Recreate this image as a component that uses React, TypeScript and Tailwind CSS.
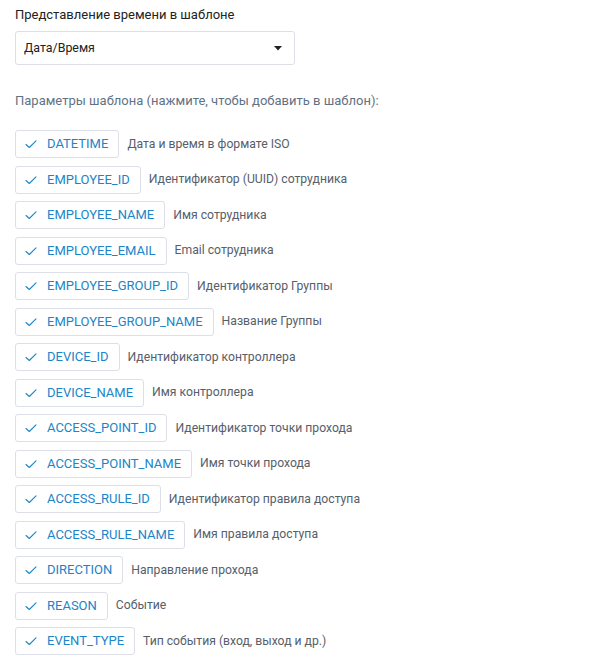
import React from "react";

const params: [string, string][] = [
  ["DATETIME", "Дата и время в формате ISO"],
  ["EMPLOYEE_ID", "Идентификатор (UUID) сотрудника"],
  ["EMPLOYEE_NAME", "Имя сотрудника"],
  ["EMPLOYEE_EMAIL", "Email сотрудника"],
  ["EMPLOYEE_GROUP_ID", "Идентификатор Группы"],
  ["EMPLOYEE_GROUP_NAME", "Название Группы"],
  ["DEVICE_ID", "Идентификатор контроллера"],
  ["DEVICE_NAME", "Имя контроллера"],
  ["ACCESS_POINT_ID", "Идентификатор точки прохода"],
  ["ACCESS_POINT_NAME", "Имя точки прохода"],
  ["ACCESS_RULE_ID", "Идентификатор правила доступа"],
  ["ACCESS_RULE_NAME", "Имя правила доступа"],
  ["DIRECTION", "Направление прохода"],
  ["REASON", "Событие"],
  ["EVENT_TYPE", "Тип события (вход, выход и др.)"],
];

function Check() {
  return (
    <svg width="12" height="12" viewBox="0 0 12 12" fill="none">
      <path d="M1 6.5 L4.3 9.5 L11 2.8" stroke="#1a85c8" strokeWidth="1.1" strokeLinecap="round" strokeLinejoin="round" />
    </svg>
  );
}

export default function App() {
  return (
    <div className="w-[600px] h-[660px] bg-white pl-[15px] pt-[6px] font-['Roboto',sans-serif]">
      <div className="text-[13px] leading-[18px] text-[#222]">Представление времени в шаблоне</div>
      <div className="mt-[7px] w-[280px] h-[34px] border border-[#dcdfe8] rounded-[3px] flex items-center justify-between pl-[8px] pr-[12px]">
        <span className="text-[12.4px] text-[#222]">Дата/Время</span>
        <svg width="8" height="5" viewBox="0 0 8 5">
          <path d="M0 0 H8 L4 4.5 Z" fill="#222" />
        </svg>
      </div>
      <div className="mt-[27px] text-[13px] leading-[18px] text-[#5f7284]">
        Параметры шаблона (нажмите, чтобы добавить в шаблон):
      </div>
      <div className="mt-[20px] flex flex-col gap-[7.5px]">
        {params.map(([k, d]) => (
          <div key={k} className="flex items-center">
            <div className="h-[28px] flex items-center border border-[#dcdfe8] rounded-[3px] pl-[9px] pr-[10px]">
              <Check />
              <span className="ml-[10px] text-[13px] text-[#1a85c8]">{k}</span>
            </div>
            <span className="ml-[8px] text-[12.2px] text-[#56606b]">{d}</span>
          </div>
        ))}
      </div>
    </div>
  );
}
